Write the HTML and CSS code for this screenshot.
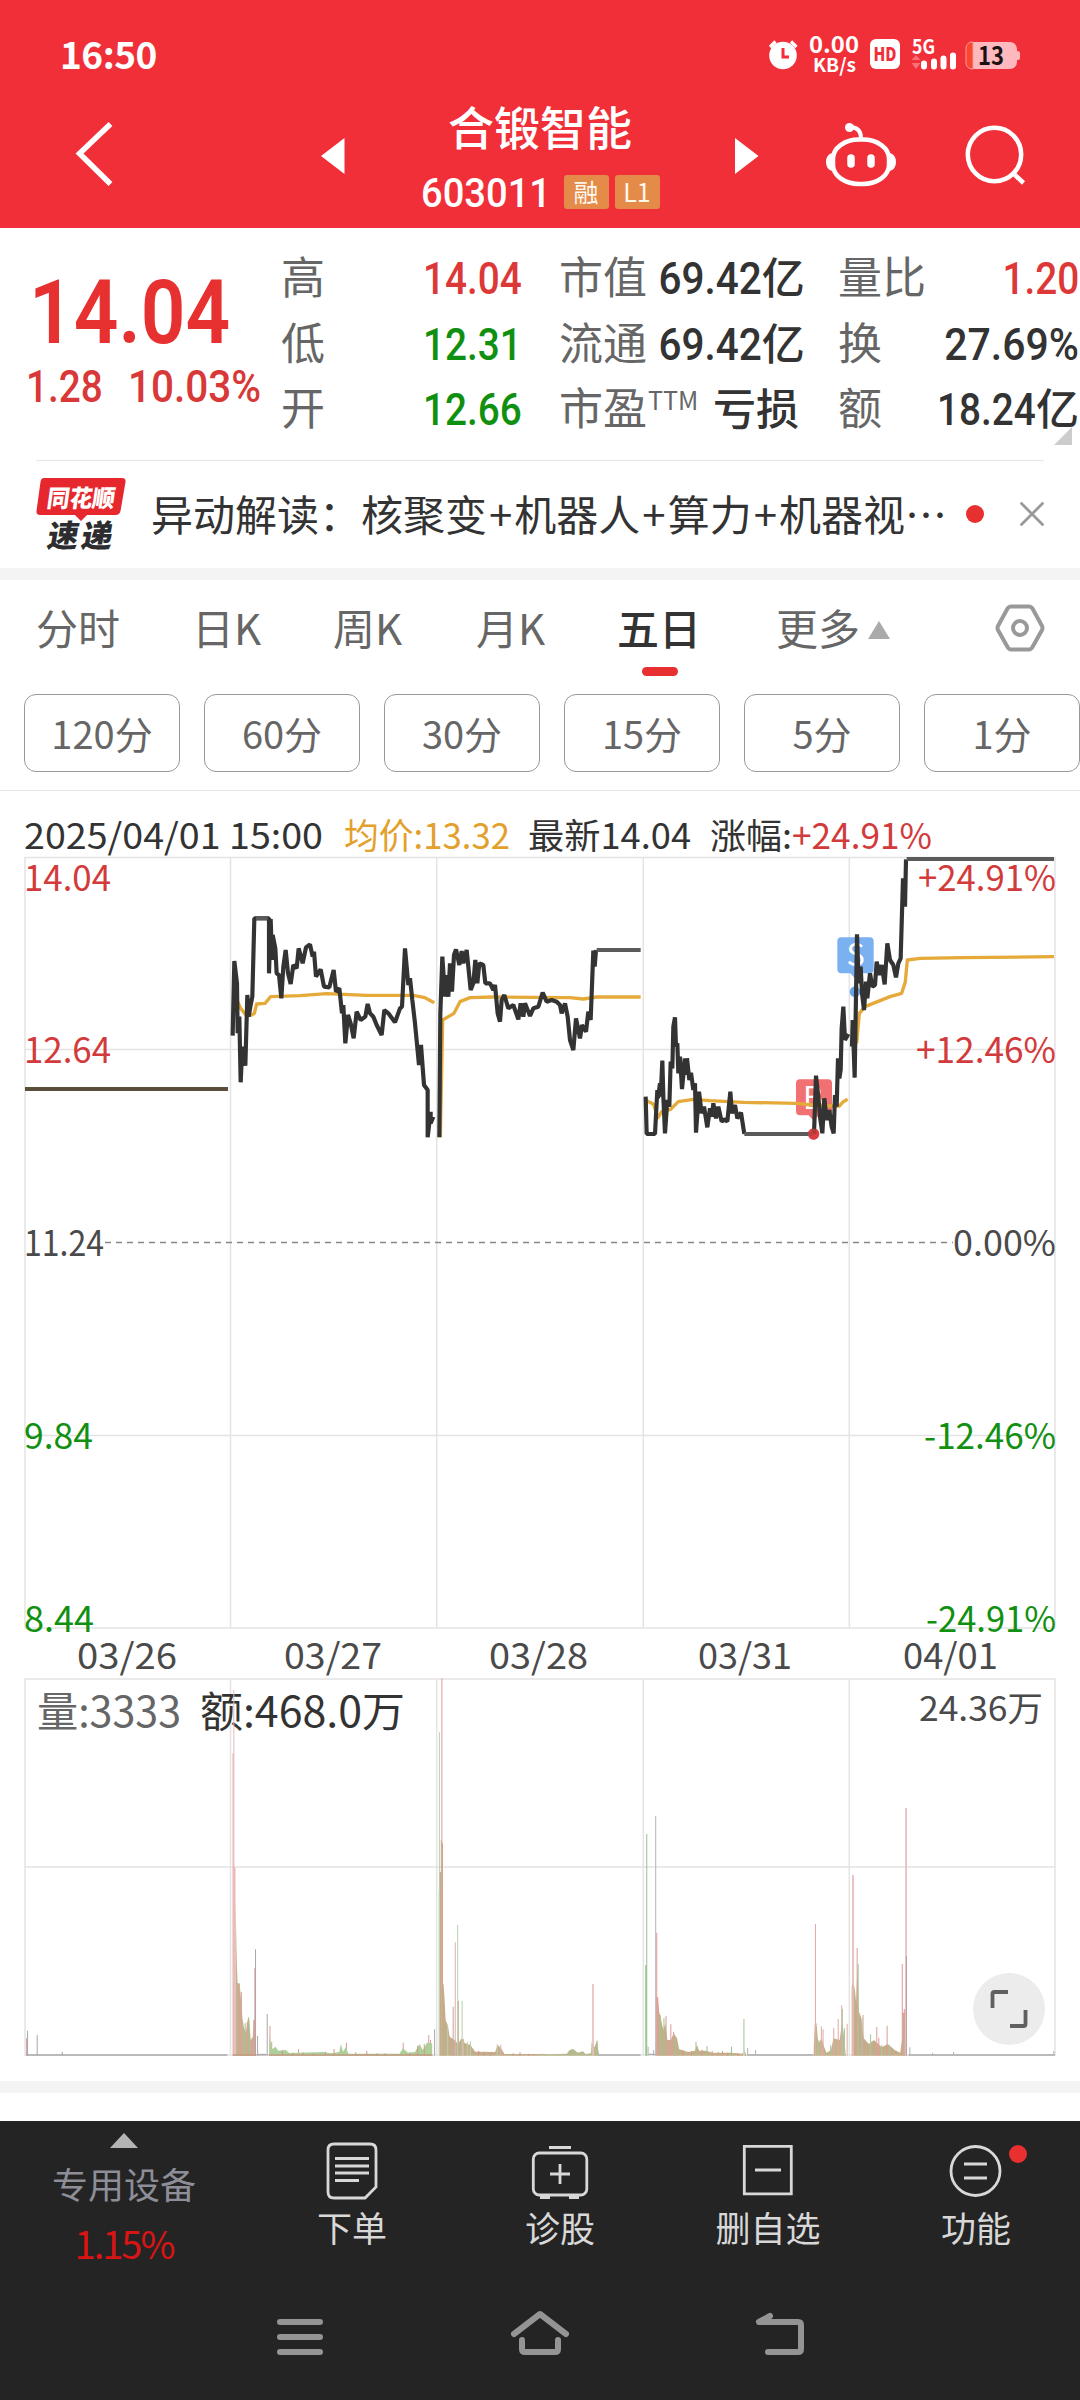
FILE: index.html
```html
<!DOCTYPE html>
<html lang="zh-CN">
<head>
<meta charset="utf-8">
<title>合锻智能 603011</title>
<link rel="stylesheet" href="styles.css">
</head>
<body>
<div class="screen">
  <header class="top">
    <div class="status">
      <span class="clock">16:50</span>
      <svg class="status-icons" width="256" height="44" viewBox="766 32 256 44">
        <circle cx="783" cy="55.5" r="13.8" fill="#fff"/>
        <path d="M770 47l5.500-5.500M796.500 47l-5.500-5.500" stroke="#fff" stroke-width="3.200"/>
        <path d="M783 48v9h6" fill="none" stroke="#f12f38" stroke-width="3"/>
        <g fill="#fff" font-weight="700">
          <text x="809" y="53" font-size="23" textLength="50" lengthAdjust="spacingAndGlyphs">0.00</text>
          <text x="813" y="71.500" font-size="19" textLength="43" lengthAdjust="spacingAndGlyphs">KB/s</text>
          <text x="912" y="54" font-size="20" textLength="23" lengthAdjust="spacingAndGlyphs">5G</text>
        </g>
        <rect x="870" y="39" width="30" height="30" rx="6" fill="#fff"/>
        <text x="873.500" y="61" font-size="19" font-weight="900" fill="#f12f38" textLength="23" lengthAdjust="spacingAndGlyphs">HD</text>
        <path d="M911.500 60h9l-4.500-5zM911.500 63h9l-4.500 6z" fill="#fa7077"/>
        <path d="M924 63.500v3M934 61.500v5M943.500 58.500v8M953 55.500v11" stroke="#fff" stroke-width="6" stroke-linecap="round"/>
        <rect x="966" y="42" width="51" height="27" rx="7" fill="#fdb9be"/>
        <path d="M973 42h-1a6 6 0 0 0-6 6v15a6 6 0 0 0 6 6h1z" fill="#fb4632" stroke="#fd9a92"/>
        <path d="M1017 51q3 0 3 2v5q0 2-3 2z" fill="#fdb9be"/>
        <text x="978" y="65" font-size="25" font-weight="700" fill="#1c1113" textLength="26" lengthAdjust="spacingAndGlyphs">13</text>
      </svg>
    </div>
    <div class="titlebar">
      <svg class="ico-back" width="50" height="80" viewBox="70 114 50 80"><path d="M110.500 124L79.500 153.500L110.500 184" fill="none" stroke="#fff" stroke-width="5.500"/></svg>
      <svg class="ico-prev" width="26" height="36" viewBox="0 0 26 36"><path d="M1 18L24.500 0v36z" fill="#fff"/></svg>
      <div class="stock">
        <h1>合锻智能</h1>
        <div class="code"><span class="code-num"><span class="din">603011</span></span><span class="tag">融</span><span class="tag">L1</span></div>
      </div>
      <svg class="ico-next" width="26" height="36" viewBox="0 0 26 36"><path d="M24.500 18L1 0v36z" fill="#fff"/></svg>
      <svg class="ico-bot" width="72" height="66" viewBox="825 122 72 66">
        <rect x="833" y="139.500" width="56" height="44.500" rx="26" ry="19" fill="none" stroke="#fff" stroke-width="4.500"/>
        <path d="M832 153q-6 2-6 9t6 9zM890 153q6 2 6 9t-6 9z" fill="#fff"/>
        <path d="M849 127q12 0 12 11" fill="none" stroke="#fff" stroke-width="4"/><circle cx="849.500" cy="127.500" r="4.500" fill="#fff"/>
        <path d="M851 158v6M871 158v6" stroke="#fff" stroke-width="7.500" stroke-linecap="round"/>
      </svg>
      <svg class="ico-search" width="64" height="64" viewBox="964 124 64 64"><circle cx="994.500" cy="154.500" r="26.700" fill="none" stroke="#fff" stroke-width="4.500"/><path d="M1013.500 173.500l10 9.500" stroke="#fff" stroke-width="4.500"/></svg>
    </div>
  </header>

  <section class="quote">
    <div class="price">
      <div class="last"><span class="din">14.04</span></div>
      <div class="change"><span class="din chg">1.28</span><span class="din pct">10.03%</span></div>
    </div>
    <dl class="col c1">
      <div><dt>高</dt><dd class="up"><span class="din">14.04</span></dd></div>
      <div><dt>低</dt><dd class="down"><span class="din">12.31</span></dd></div>
      <div><dt>开</dt><dd class="down"><span class="din">12.66</span></dd></div>
    </dl>
    <dl class="col c2">
      <div><dt>市值</dt><dd><span class="din">69.42</span>亿</dd></div>
      <div><dt>流通</dt><dd><span class="din">69.42</span>亿</dd></div>
      <div><dt>市盈<sup>TTM</sup></dt><dd>亏损</dd></div>
    </dl>
    <dl class="col c3">
      <div><dt>量比</dt><dd class="up"><span class="din">1.20</span></dd></div>
      <div><dt>换</dt><dd><span class="din pct">27.69%</span></dd></div>
      <div><dt>额</dt><dd><span class="din">18.24</span>亿</dd></div>
    </dl>
    <i class="corner"></i>
  </section>

  <section class="news">
    <svg class="logo" width="90" height="76" viewBox="36 476 90 76">
      <path d="M44 478h78q4 0 3.500 4l-5 29q-1 4-5 4H87l-6 6-6-6H40q-4 0-3.500-4l4-29q.5-4 3.500-4z" fill="#e6272d"/>
      <text transform="translate(46 507) skewX(-8)" font-size="24" font-weight="900" fill="#fff" textLength="68" lengthAdjust="spacingAndGlyphs">同花顺</text>
      <text transform="translate(46 547) skewX(-10)" font-size="31" font-weight="900" fill="#2d2d2f" textLength="65">速递</text>
    </svg>
    <p>异动解读：核聚变<b>+</b>机器人<b>+</b>算力<b>+</b>机器视⋯</p>
    <i class="dot"></i>
    <svg class="close" width="28" height="28" viewBox="0 0 28 28"><path d="M3.500 3.500l21 21M24.500 3.500l-21 21" stroke="#999" stroke-width="2.800" stroke-linecap="round"/></svg>
  </section>

  <nav class="tabs">
    <span>分时</span><span>日K</span><span>周K</span><span>月K</span><span class="on">五日</span><span>更多<i class="tri"></i></span>
    <svg width="50" height="48" viewBox="0 0 50 48"><path d="M16 2.500h18q2 0 3.500 2L47 22q1 2 0 4l-9.500 17q-1.500 2.500-3.500 2.500H16q-2 0-3.500-2.500L3 26q-1-2 0-4L12.500 4.500q1.500-2 3.500-2z" fill="none" stroke="#999" stroke-width="4"/><circle cx="25" cy="24" r="7" fill="none" stroke="#999" stroke-width="4"/></svg>
  </nav>
  <div class="pills"><span>120分</span><span>60分</span><span>30分</span><span>15分</span><span>5分</span><span>1分</span></div>

  <svg class="chart" width="1080" height="1290" viewBox="0 791 1080 1290">
    <!-- grid -->
    <g stroke="#e4e4e4" stroke-width="1.500" fill="none">
      <path d="M25 857.500H1055V1628H25zM25 1049.500H1055M25 1435.500H1055"/>
      <path d="M230.500 857V1628M436.700 857V1628M643.300 857V1628M849.300 857V1628"/>
      <path d="M25 1679H1055V2055H25zM25 1867H1055"/>
      <path d="M230.500 1679V2055M436.700 1679V2055M643.300 1679V2055M849.300 1679V2055"/>
    </g>
    <path d="M105 1242.500H953" stroke="#888" stroke-width="1.500" stroke-dasharray="6 5"/>

    <!-- trade markers -->
    <g transform="translate(630 850) scale(.33333)">
      <path d="M634 262h85q12 0 12 12v84q0 12-12 12h-28l-15 16-15-16h-27q-12 0-12-12v-84q0-12 12-12z" fill="#7bb0f1"/>
      <circle cx="675" cy="425" r="16" fill="#6aa4ea"/>
      <path d="M510 688h84q12 0 12 12v84q0 12-12 12h-28l-15 16-15-16h-26q-12 0-12-12v-84q0-12 12-12z" fill="#f17072"/>
      <circle cx="551" cy="852" r="17" fill="#dc4a4c"/>
      <g fill="#fff" font-size="92" text-anchor="middle"><text x="677" y="348">S</text><text x="549" y="778">B</text></g>
    </g>
    <!-- average price -->
    <g fill="none" stroke="#e5aa39" stroke-width="10" stroke-linejoin="round">
      <g transform="translate(200 850) scale(.33333)">
        <path d="M106 440L122 475L135 492L155 495L163 490L170 462L195 460L212 440L300 437L380 431L500 436L640 436L675 443L703 458"/>
        <path d="M721 862L728 510L745 500L762 490L780 455L810 443L880 441L1000 442L1110 443L1150 447L1190 441L1322 441"/>
      </g>
      <g transform="translate(630 850) scale(.33333)">
        <path d="M50 752L70 762L84 803L95 785L122 778L145 755L190 748L240 752L340 757L500 760L545 765L600 768L628 768L640 755L653 748"/>
        <path d="M680 580L688 490L705 470L780 440L815 430L826 395L832 330L870 325L1000 323L1272 320"/>
      </g>
    </g>
    <!-- price -->
    <path d="M25 1089H228" stroke="#5c4e3a" stroke-width="3.800"/>
    <g fill="none" stroke="#333" stroke-width="12.500" stroke-linejoin="bevel">
      <g transform="translate(200 850) scale(.33333)">
        <path d="M98 557L103 333L111 400L113 550L118 500L122 697L127 590L136 647L142 435L146 500L152 465L157 440L163 205H207V370L212 207L216 330L218 255L226 295L230 370L237 375L244 445L250 350L257 300L264 370L272 402L280 345L290 355L296 295L308 340L318 292L330 283L338 320L342 305L348 380L362 358L372 410L388 412L401 360L408 425L418 415L426 490L430 465L436 580L444 495L452 520L461 565L470 485L482 510L496 500L503 462L510 490L520 500L530 525L545 555L553 480L565 490L585 517L600 475L606 470L615 295L625 405L630 385L637 450L645 520L657 645L663 585L672 705L683 720V862L692 785V820L700 800"/>
        <path d="M718 862L721 490L727 320L735 440L738 375L745 440L750 340L756 425L762 315L768 298L778 345L785 303L790 340L800 300L812 420L820 400L826 330L832 400L838 340L850 345L856 400L870 400L880 420L885 405L893 490L900 515L905 450L913 435L925 475L940 465L955 508L962 460L970 500L975 460L990 498L1000 475L1015 470L1028 428L1040 455L1055 450L1070 455L1080 465L1085 490L1095 460L1103 500L1110 570L1120 600L1128 505L1140 565L1146 525L1158 545L1165 485L1172 510L1180 302L1184 350L1188 300"/>
        <path d="M168 204H203M1190 300H1322" stroke="#5a5a5a"/>
      </g>
      <g transform="translate(630 850) scale(.33333)">
        <path d="M47 740L50 852H75L82 720L84 745L90 700L92 740L97 632L100 740L105 850L112 750L118 770L122 635L127 655L130 530L135 502L138 590L142 580L145 670L150 620L156 717L165 625L168 675L171 625L178 690L183 668L190 720L195 700L198 848L207 725L215 790L222 770L232 832L240 775L246 800L250 760L258 805L265 770L275 815L285 808L292 815L301 725L306 790L315 765L322 805L333 788L343 852"/>
        <path d="M552 852L558 677L565 740L570 800L577 850L583 745L590 810L598 780L605 830L611 850L615 735L620 770L624 625L628 685L632 660L635 535L640 470L645 570L655 552"/>
        <path d="M666 590L668 510L674 683L681 253L686 400L692 350L696 430L702 480L708 395L712 445L720 370L727 410L735 405L740 335L748 375L755 345L764 403L772 280L780 330L790 345L798 382L805 340L812 325L819 85L825 170L828 28"/>
        <path d="M343 852H548M830 27H1272" stroke="#5a5a5a"/>
      </g>
    </g>
    <circle cx="813.500" cy="1134" r="5.600" fill="#dc3a3c" opacity=".75"/>

    <!-- chart labels -->
    <g font-size="35.500" class="lbl">
      <text x="24" y="849" fill="#333" textLength="299" lengthAdjust="spacingAndGlyphs">2025/04/01 15:00</text>
      <text x="344" y="849" fill="#e3a02c" textLength="166" lengthAdjust="spacingAndGlyphs">均价:13.32</text>
      <text x="528" y="849" fill="#333" textLength="163" lengthAdjust="spacingAndGlyphs">最新14.04</text>
      <text x="710" y="849" fill="#333" textLength="82" lengthAdjust="spacingAndGlyphs">涨幅:</text>
      <text x="792" y="849" fill="#d23b3b" textLength="140" lengthAdjust="spacingAndGlyphs">+24.91%</text>
      <g fill="#d23b3b">
        <text x="24" y="890.500" textLength="87" lengthAdjust="spacingAndGlyphs">14.04</text>
        <text x="24" y="1062.500" textLength="87" lengthAdjust="spacingAndGlyphs">12.64</text>
        <text x="918" y="890.500" textLength="138" lengthAdjust="spacingAndGlyphs">+24.91%</text>
        <text x="916" y="1062.500" textLength="140" lengthAdjust="spacingAndGlyphs">+12.46%</text>
      </g>
      <g fill="#4a4a4a">
        <text x="24" y="1255.500" textLength="80" lengthAdjust="spacingAndGlyphs">11.24</text>
        <text x="953" y="1255.500" textLength="103" lengthAdjust="spacingAndGlyphs">0.00%</text>
        <text x="77" y="1668.500" textLength="100" lengthAdjust="spacingAndGlyphs">03/26</text>
        <text x="284" y="1668.500" textLength="98" lengthAdjust="spacingAndGlyphs">03/27</text>
        <text x="489" y="1668.500" textLength="99" lengthAdjust="spacingAndGlyphs">03/28</text>
        <text x="698" y="1668.500" textLength="94" lengthAdjust="spacingAndGlyphs">03/31</text>
        <text x="903" y="1668.500" textLength="95" lengthAdjust="spacingAndGlyphs">04/01</text>
        <text x="919" y="1720.500" font-size="34" textLength="124" lengthAdjust="spacingAndGlyphs">24.36万</text>
      </g>
      <g fill="#129012">
        <text x="24" y="1448.500" textLength="69" lengthAdjust="spacingAndGlyphs">9.84</text>
        <text x="24" y="1631.500" textLength="70" lengthAdjust="spacingAndGlyphs">8.44</text>
        <text x="924" y="1448.500" textLength="132" lengthAdjust="spacingAndGlyphs">-12.46%</text>
        <text x="926" y="1631.500" textLength="130" lengthAdjust="spacingAndGlyphs">-24.91%</text>
      </g>
      <text x="37" y="1726.500" font-size="42" fill="#666" textLength="144" lengthAdjust="spacingAndGlyphs">量:3333</text>
      <text x="200" y="1726.500" font-size="42" fill="#333" textLength="205" lengthAdjust="spacingAndGlyphs">额:468.0万</text>
    </g>

    <!-- volume -->
    <g transform="translate(0 1590) scale(.34436 .33333)" stroke-width="3" fill="none">
      <path d="M677 1397V490M682 1397V832" stroke="#e39b9b"/><path d="M679 1397V300" stroke="#e9b9b9"/>
      <path d="M684 1397V940L688 1128L690 1180H696L700 1230L704 1285L708 1310L714 1330L720 1285L724 1290L728 1350L734 1340L738 1275V1397z" fill="#c3b48f" stroke="none"/>
      <path d="M694 1397V1182M701 1397V1206M718 1397V1295M731 1397V1350M737 1397V1290M740 1397V1135" stroke="#df9e9a"/>
      <path d="M712 1397V1300M722 1397V1282" stroke="#9fc38d"/>
      <path d="M742 1397V1078M748 1397V1338M776 1397V1272M1262 1397V1318M80 1397V1322M108 1397V1335M181 1397V1385" stroke="#aaaaac"/>
      <path d="M77 1397V1345M784 1397V1308M789 1397V1355M867 1397V1377M1006 1397V1358M1171 1397V1358M1245 1397V1335M1250 1397V1350" stroke="#dda09c"/>
      <path d="M782 1397V1340L790 1378L800 1370L808 1382L830 1380L840 1389L940 1386L960 1390L985 1386L990 1362L996 1385L1004 1372L1012 1391L1160 1391L1170 1375L1185 1388L1205 1386L1218 1362L1228 1380L1240 1358L1255 1360V1397z" fill="#add09a" stroke="none"/>
      <path d="M820 1397v-16M850 1397v-9M880 1397v-10M910 1397v-7M945 1397v-12M970 1397v-20M1033 1397v-10M1065 1397v-14M1095 1397v-7M1118 1397v-7M1190 1397v-9M1213 1397v-30M1232 1397v-34" stroke="#cf9a8a"/>
      <path d="M76 1395H660" stroke="#aaa" stroke-width="4"/><path d="M748 1394H774" stroke="#aaa" stroke-width="5"/>
      <path d="M676 1395H745M780 1395H1256" stroke="#c39a80" stroke-width="4"/>
      <path d="M1276 1397V427" stroke="#b6d5ad"/><path d="M1274 1397V900" stroke="#e2ecda"/>
      <path d="M1283 1397V264" stroke="#eab5b5" stroke-width="4"/><path d="M1285 1397V760" stroke="#dc9d98"/>
      <path d="M1277 1397V846H1280V750H1283V1397zM1284 1397V1182H1288L1291 1228L1294 1290L1300 1305L1306 1340L1320 1350L1330 1362L1340 1345L1350 1360L1366 1365L1380 1385L1438 1386L1445 1365L1455 1375L1465 1392L1568 1392V1397z" fill="#c3ad8a" stroke="none"/>
      <path d="M1316 1397V1250M1331 1397V1232" stroke="#c5a9a4"/><path d="M1322 1397V1057M1346 1397V1347M1454 1397V1365" stroke="#e3b1ad"/>
      <path d="M1329 1397V1005M1342 1397V1232M1300 1397V1305M1357 1397V1355M1366 1397V1354M1444 1397V1363" stroke="#b7d3aa"/>
      <path d="M1390 1397v-14M1405 1397v-12M1425 1397v-11M1490 1397v-7M1510 1397v-10M1535 1397v-6" stroke="#cf9a8a"/>
    </g>
    <g transform="translate(540 1590) scale(.34436 .33333)" stroke-width="3" fill="none">
      <path d="M0 1397V1391L25 1393L78 1391L84 1382L95 1376L110 1388L125 1384L132 1392L148 1390L150 1355L158 1372L165 1353L172 1397z" fill="#b9b88e" stroke="none"/>
      <path d="M154 1397V1182" stroke="#ecbfbf" stroke-width="5"/><path d="M166 1397V1352M88 1397V1380M310 1397V732M307 1397V1125" stroke="#9cc48e"/>
      <path d="M170 1395H292M315 1393H336M603 1395H795M1070 1395H1495" stroke="#aaaaac" stroke-width="4"/>
      <path d="M336 1397V678M314 1397V1370M330 1397V1380M626 1397V1380M603 1397V1374M1064 1397V1098M1074 1397V1372M1140 1397V1388M1201 1397V1386M1492 1397V1383" stroke="#b6b4b6"/>
      <path d="M338 1397V1222H342L346 1265L352 1290L358 1320L364 1300L370 1350L380 1350L388 1330L398 1345L404 1378L430 1386L450 1382L456 1365L462 1382L482 1382L500 1388L555 1388L588 1391L592 1375L600 1397z" fill="#c3b08b" stroke="none"/>
      <path d="M339 1397V1028M342 1397V1222M366 1397V1277M380 1397V1303M373 1397V1358M388 1397V1325" stroke="#df9e9a"/>
      <path d="M349 1397V1275M360 1397V1285M393 1397V1342M453 1397V1356M485 1397V1368M556 1397V1370" stroke="#9fc38d"/>
      <path d="M592 1397V1287" stroke="#c6ddbf" stroke-width="5"/>
      <path d="M415 1397v-16M440 1397v-14M470 1397v-18M500 1397v-14M517 1397v-10M530 1397v-14M545 1397v-9M575 1397v-8" stroke="#d49a8a"/>
      <path d="M795 1397V1370L798 1300L803 1300L808 1360L818 1345L825 1370L832 1388L845 1380L852 1345L870 1350L877 1300L882 1330L888 1397z" fill="#c6b38d" stroke="none"/>
      <path d="M800 1397V1002M817 1397V1309M822 1397V1318M853 1397V1314M866 1397V1287M876 1397V1246M892 1397V1301" stroke="#e2aca8"/>
      <path d="M808 1397V1350M844 1397V1366M878 1397V1257M884 1397V1315" stroke="#a9c99b"/>
      <path d="M905 1397V1188L910 1173L915 1205L918 1240L922 1125L926 1265L932 1280L940 1345L955 1362L970 1350L980 1360L992 1372L1010 1362L1030 1380L1046 1388L1052 1345V1268H1060V1397z" fill="#c3ad8a" stroke="none"/>
      <path d="M909 1397V855" stroke="#ebb9b9" stroke-width="5"/>
      <path d="M921 1397V1074M938 1397V1275M978 1397V1311M984 1397V1343M1008 1397V1307M1052 1397V1122M1058 1397V1257" stroke="#dd9f9b"/>
      <path d="M924 1397V1122M935 1397V1285M960 1397V1333M992 1397V1365M1015 1397V1366M1060 1397V1345" stroke="#a9c99b"/>
      <path d="M1063 1397V654" stroke="#e9bcbc" stroke-width="5"/><path d="M1064 1397V1098" stroke="#b99ca0"/>
    </g>
    <circle cx="1009" cy="2009" r="36" fill="#ececec"/>
    <path d="M992.500 2008V1994q0-2 2-2H1008M1025.500 2010V2024q0 2-2 2H1010" fill="none" stroke="#606060" stroke-width="3.800"/>
  </svg>

  <footer class="bottom">
    <div class="actions">
      <div class="sector"><i class="up-tri"></i><span>专用设备</span><b>1.15%</b></div>
      <div class="act">
        <svg width="60" height="60" viewBox="0 0 60 60" class="line"><path d="M12 4h36q6 0 6 6v37L43 58H12q-6 0-6-6V10q0-6 6-6z"/><path d="M13 18.500h34M13 26h34M13 33h34M13 40.500h24"/></svg>
        <span>下单</span></div>
      <div class="act">
        <svg width="60" height="60" viewBox="0 0 60 60" class="line"><rect x="3.300" y="13" width="53.500" height="42" rx="6"/><path d="M19 7.500h22M30 24v20M20 34h20M10 57.500h10M39 57.500h10"/></svg>
        <span>诊股</span></div>
      <div class="act">
        <svg width="60" height="60" viewBox="0 0 60 60" class="line"><path d="M6.300 6.300h47v47.500h-47zM17 30h26"/></svg>
        <span>删自选</span></div>
      <div class="act">
        <svg width="60" height="60" viewBox="0 0 60 60" class="line"><circle cx="29.500" cy="31" r="24.500"/><path d="M18 24h23M18 38h23"/></svg>
        <i class="badge"></i>
        <span>功能</span></div>
    </div>
    <div class="system">
      <svg width="60" height="60" viewBox="270 2306 60 60"><path d="M280 2322h40M280 2337h40M280 2352h40"/></svg>
      <svg width="60" height="60" viewBox="510 2306 60 60"><path d="M514 2334L540 2314L566 2334M522 2340V2349q0 3 3 3H555q3 0 3-3V2340"/></svg>
      <svg width="60" height="60" viewBox="750 2306 60 60"><path d="M770 2316L759 2322H798q3 0 3 3V2349q0 3-3 3H768"/></svg>
    </div>
  </footer>
</div>
</body>
</html>
```

FILE: styles.css
```css
* { box-sizing: border-box; margin: 0; padding: 0; }
body { width: 1080px; background: #fff; font-family: "Noto Sans CJK SC", sans-serif; color: #333; }
i, b { font-style: normal; font-weight: inherit; }
svg { display: block; flex: none; }
.screen { width: 1080px; height: 2400px; overflow: hidden; display: flex; flex-direction: column; }
.screen > * { flex: none; }

.din { display: inline-block; font-family: Roboto, sans-serif; font-weight: 500; transform: scaleX(.86); transform-origin: right center; white-space: nowrap; }
.up { color: #dd3838; }
.down { color: #109010; }

/* header */
.top { height: 228px; background: #f12f38; color: #fff; }
.status { height: 100px; padding: 31px 58px 0 60px; display: flex; justify-content: space-between; align-items: flex-start; }
.status-icons { margin-top: 1px; }
.clock { font-size: 37px; font-weight: 700; line-height: 44px; letter-spacing: -.5px; }
.titlebar { height: 128px; display: flex; align-items: flex-start; }
.ico-back { margin: 14px 0 0 70px; }
.ico-prev { margin: 38px 0 0 200px; }
.stock { width: 388px; text-align: center; }
.stock h1 { font-size: 46px; font-weight: 500; line-height: 50px; }
.code { display: flex; justify-content: center; align-items: center; height: 36px; margin-top: 24px; gap: 6px; }
.code-num { width: 137px; font-size: 41px; line-height: 34px; text-align: left; }
.code-num .din { transform-origin: left center; transform: scaleX(.93); position: relative; top: -1px; }
.tag { width: 45px; height: 34px; border-radius: 3px; background: #e48b4a; font-size: 25px; line-height: 32px; color: #fff8ee; }
.ico-next { margin: 38px 0 0 0; }
.ico-bot { margin: 22px 0 0 65px; }
.ico-search { margin: 24px 0 0 67px; }

/* quote */
.quote { position: relative; height: 232px; display: flex; padding-top: 15px; }
.price { width: 281px; padding-top: 20px; color: #e73030; }
.price .din { transform-origin: left center; }
.last { height: 90px; padding-left: 29px; font-size: 89px; line-height: 84px; }
.last .din { font-weight: 600; transform: scaleX(.88); }
.change { display: flex; padding-left: 26px; font-size: 45px; line-height: 68px; color: #d83838; }
.change .chg { width: 102px; }
.change .pct { transform: scaleX(.9); }
.col { font-size: 44px; }
.col > div { height: 65.5px; line-height: 65.5px; display: flex; justify-content: space-between; white-space: nowrap; }
.col dt { color: #666; }
.col dt sup { font-size: 25px; line-height: 20px; vertical-align: 15px; margin-left: 1px; }
.col dd { font-weight: 500; font-size: 43px; }
.col .din { font-size: 45px; }
.col .pct { transform: scaleX(.91); }
.c1 { width: 241px; }
.c2 { width: 240px; margin-left: 37px; }
.c2 .din { transform: scaleX(.9); }
.c3 { width: 241px; margin-left: 39px; }
.corner { position: absolute; right: 8px; bottom: 15px; border-left: 18px solid transparent; border-bottom: 18px solid #ccc; }

/* news */
.news { height: 120px; display: flex; align-items: center; border-bottom: 12px solid #f4f4f4; position: relative; }
.news::before { content: ""; position: absolute; left: 36px; right: 36px; top: 0; height: 1px; background: #e6e6e6; }
.logo { margin-left: 36px; }
.news p { width: 805px; margin: 0 0 3px 25px; font-size: 42px; white-space: nowrap; }
.news b { padding: 0 2px; }
.dot { width: 18px; height: 18px; margin-left: 10px; border-radius: 50%; background: #e73030; }
.close { margin-left: 34px; }

/* tabs */
.tabs { height: 114px; display: grid; grid-template-columns: 156px 141px 143px 141px 159px 222px auto; padding-left: 36px; font-size: 42px; line-height: 94px; color: #666; }
.tabs .on { position: relative; color: #333; font-weight: 500; }
.tabs .on::after { content: ""; position: absolute; left: 25px; top: 87px; width: 36px; height: 9px; border-radius: 5px; background: #e73030; }
.tri { display: inline-block; margin-left: 8px; vertical-align: 6px; border: 11px solid transparent; border-top: 0; border-bottom: 18px solid #aaa; }
.tabs svg { margin-top: 24px; margin-left: -3px; }
.pills { height: 97px; padding-left: 24px; display: flex; gap: 24px; border-bottom: 1px solid #e4e4e4; }
.pills span { flex: none; width: 156px; height: 78px; border: 1.5px solid #999; border-radius: 12px; text-align: center; font-size: 38px; line-height: 75px; color: #666; }
.lbl { font-weight: 400; }

/* bottom bars */
.bottom { height: 319px; border-top: 12px solid #f4f4f4; background: #242424; }
.bottom::before { content: ""; display: block; height: 28px; background: #fff; }
.actions { height: 165px; display: flex; }
.sector { width: 248px; display: flex; flex-direction: column; align-items: center; padding-top: 12px; color: #8e8e99; font-size: 36px; }
.sector span { line-height: 50px; margin-top: 10px; }
.sector b { color: #d81414; line-height: 50px; margin-top: 10px; font-size: 38px; letter-spacing: -2px; }
.up-tri { border: 14px solid transparent; border-top: 0; border-bottom: 15px solid #b4b4b4; }
.act { width: 208px; display: flex; flex-direction: column; align-items: center; padding-top: 19px; color: #d8d8d8; font-size: 35px; position: relative; }
.act span { line-height: 50px; margin-top: 2px; }
.line { fill: none; stroke: #d8d8d8; stroke-width: 2.8; }
.badge { position: absolute; left: 137px; top: 24px; width: 18px; height: 18px; border-radius: 50%; background: #e83030; }
.system { display: flex; padding: 20px 270px 0; gap: 180px; fill: none; stroke: #949494; stroke-width: 6; stroke-linecap: round; stroke-linejoin: round; }
```
